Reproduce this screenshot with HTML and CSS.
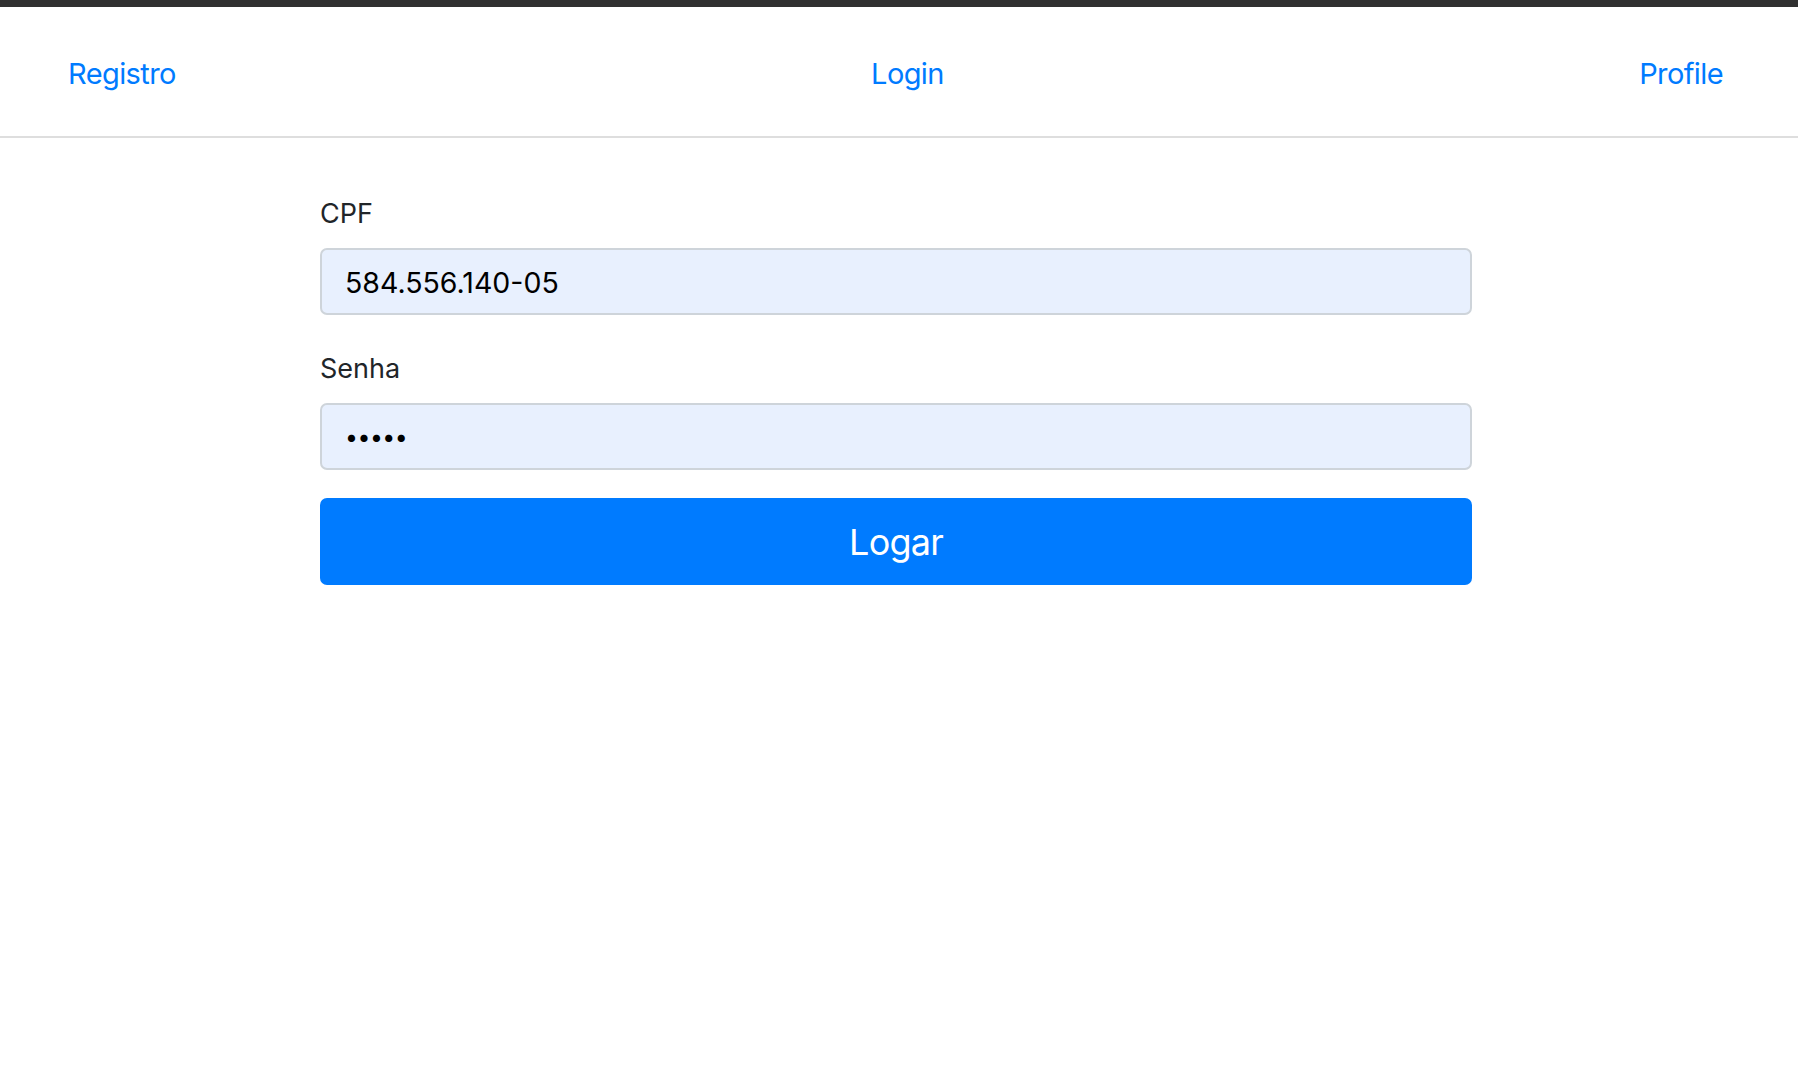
FILE: index.html
```html
<!DOCTYPE html>
<html lang="pt">
<head>
<meta charset="utf-8">
<title>Login</title>
<link rel="stylesheet" href="styles.css">
</head>
<body>
<div class="topbar"></div>
<header class="nav">
  <a class="nav-link" href="#">Registro</a>
  <a class="nav-link" href="#">Login</a>
  <a class="nav-link" href="#">Profile</a>
</header>
<main class="content">
  <form class="login-form">
    <div class="field">
      <label class="field-label" for="cpf">CPF</label>
      <input class="field-input" id="cpf" type="text" value="584.556.140-05">
    </div>
    <div class="field">
      <label class="field-label" for="senha">Senha</label>
      <input class="field-input field-password" id="senha" type="password" value="12345">
    </div>
    <button class="submit" type="button">Logar</button>
  </form>
</main>
</body>
</html>
```
FILE: styles.css
```css
* { box-sizing: border-box; }
html, body { margin: 0; padding: 0; background: #fff; }
body { font-family: Inter, "Noto Sans", sans-serif; color: #212529; }

.topbar { height: 7px; background: #303030; }

.nav {
  height: 131px;
  border-bottom: 2px solid #dedede;
  display: flex;
  justify-content: space-between;
  align-items: center;
  padding: 5px 75px 0 68px;
}
.nav-link {
  color: #007bff;
  text-decoration: none;
  font-size: 29px;
  line-height: 36px;
  letter-spacing: -0.6px;
}

.content { padding: 60px 0 0 320px; }
.login-form { width: 1152px; display: flex; flex-direction: column; }

.field { display: flex; flex-direction: column; }
.field + .field { margin-top: 38px; }
.field-label {
  font-size: 27px;
  line-height: 32px;
  margin-bottom: 18px;
  letter-spacing: 0;
}
.field-input {
  height: 67px;
  border: 2px solid #ced4da;
  border-radius: 7px;
  background: #e8f0fe;
  padding: 2px 23px 0;
  font-family: Inter, "Noto Sans", sans-serif;
  font-size: 28.5px;
  color: #000;
  outline: none;
  letter-spacing: 0;
}
.field-password { letter-spacing: -0.5px; font-size: 23px; padding-top: 0; }

.submit {
  margin-top: 28px;
  height: 87px;
  border: none;
  border-radius: 7px;
  background: #007bff;
  color: #fff;
  font-family: Inter, "Noto Sans", sans-serif;
  font-size: 36px;
  letter-spacing: -0.8px;
  padding-top: 2px;
}
```
